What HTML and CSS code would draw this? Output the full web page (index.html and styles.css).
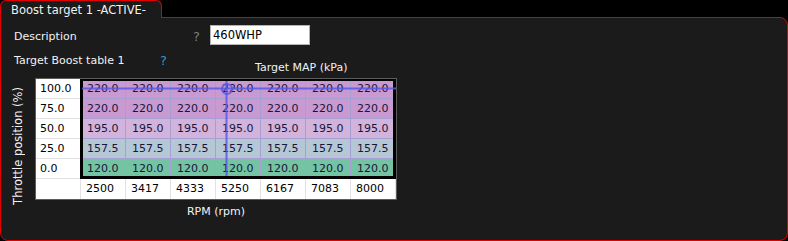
FILE: index.html
```html
<!DOCTYPE html>
<html lang="en">
  <head>
    <meta charset="UTF-8" />
    <meta name="viewport" content="width=device-width, initial-scale=1.0" />
    <title>Boost target 1</title>
    <link rel="stylesheet" href="styles.css">
  </head>
  <body>
    <div class="tab">Boost target 1 -ACTIVE-</div>
    <div class="panel">
      <div class="field-row">
        <span class="field-label">Description</span>
        <span class="help">?</span>
        <input class="text-input" type="text" value="460WHP" readonly />
      </div>
      <div class="table-row">
        <span class="table-label">Target Boost table 1</span>
        <span class="help help-info">?</span>
        <span class="x-title">Target MAP (kPa)</span>
      </div>
      <div class="chart">
        <div class="y-axis"><span>Throttle position (%)</span></div>
        <div class="plot">
          <div class="map-grid">
            <div class="cell head">100.0</div>
            <div class="cell r100">220.0</div><div class="cell r100">220.0</div><div class="cell r100">220.0</div><div class="cell r100">220.0</div><div class="cell r100">220.0</div><div class="cell r100">220.0</div><div class="cell r100">220.0</div>
            <div class="cell head">75.0</div>
            <div class="cell r75">220.0</div><div class="cell r75">220.0</div><div class="cell r75">220.0</div><div class="cell r75">220.0</div><div class="cell r75">220.0</div><div class="cell r75">220.0</div><div class="cell r75">220.0</div>
            <div class="cell head">50.0</div>
            <div class="cell r50">195.0</div><div class="cell r50">195.0</div><div class="cell r50">195.0</div><div class="cell r50">195.0</div><div class="cell r50">195.0</div><div class="cell r50">195.0</div><div class="cell r50">195.0</div>
            <div class="cell head">25.0</div>
            <div class="cell r25">157.5</div><div class="cell r25">157.5</div><div class="cell r25">157.5</div><div class="cell r25">157.5</div><div class="cell r25">157.5</div><div class="cell r25">157.5</div><div class="cell r25">157.5</div>
            <div class="cell head">0.0</div>
            <div class="cell r0">120.0</div><div class="cell r0">120.0</div><div class="cell r0">120.0</div><div class="cell r0">120.0</div><div class="cell r0">120.0</div><div class="cell r0">120.0</div><div class="cell r0">120.0</div>
            <div class="cell foot"></div>
            <div class="cell foot">2500</div><div class="cell foot">3417</div><div class="cell foot">4333</div><div class="cell foot">5250</div><div class="cell foot">6167</div><div class="cell foot">7083</div><div class="cell foot">8000</div>

            <div class="frame"></div>
            <svg class="cursor" width="316" height="100" viewBox="0 0 316 100">
              <line x1="2" y1="9.5" x2="316" y2="9.5" />
              <line x1="146.5" y1="2" x2="146.5" y2="97" />
              <circle cx="147" cy="10" r="5" />
            </svg>
          </div>
          <div class="x-axis">RPM (rpm)</div>
        </div>
      </div>
    </div>
  </body>
</html>
```
FILE: styles.css
```css
body {
  margin: 0;
  background-color: #000;
  font-family: "DejaVu Sans", Verdana, sans-serif;
  font-size: 11px;
  color: #f2f2f2;
}
.tab {
  position: relative;
  z-index: 1;
  display: inline-block;
  height: 17px;
  line-height: 18px;
  padding: 0 15px 0 10px;
  margin-bottom: -1px;
  font-size: 11.5px;
  background-color: #1b1b1b;
  border: 1px solid #e00000;
  border-bottom: none;
  border-radius: 6px 6px 0 0;
}
.panel {
  box-sizing: border-box;
  height: 224px;
  background-color: #1b1b1b;
  border: 1px solid #e00000;
  border-radius: 0 8px 8px 8px;
}
.field-row {
  display: flex;
  align-items: center;
  height: 20px;
  padding: 7px 0 0 13px;
}
.field-label {
  width: 179px;
  padding-top: 3px;
}
.help {
  width: 17px;
  padding-top: 2px;
  font-size: 13px;
  color: #7c7c7c;
}
.help-info {
  padding-top: 0;
  color: #2a9dc4;
}
.text-input {
  box-sizing: border-box;
  width: 100px;
  height: 20px;
  margin: 0;
  padding: 0 2px;
  border: 1px solid #b4b4b4;
  background-color: #fff;
  color: #000;
  font-family: inherit;
  font-size: 11.5px;
  outline: none;
}
.table-row {
  display: flex;
  align-items: flex-start;
  line-height: 14px;
  margin-top: 9px;
  padding-left: 13px;
}
.table-label {
  width: 146px;
}
.x-title {
  margin: 7px 0 0 78px;
}
.chart {
  display: flex;
  margin-top: 3px;
}
.y-axis {
  width: 34px;
  display: flex;
  align-items: center;
  justify-content: center;
}
.y-axis span {
  writing-mode: vertical-rl;
  transform: rotate(180deg);
  white-space: nowrap;
  font-size: 11.5px;
  margin-top: -6px;
}
.map-grid {
  position: relative;
  display: grid;
  grid-template-columns: repeat(8, 45px);
  grid-auto-rows: 20px;
  border: 1px solid #5c5c5c;
  color: #16163a;
}
.cell {
  box-sizing: border-box;
  line-height: 19px;
  padding-left: 6px;
  border-right: 1px solid #a69fd4;
  border-bottom: 1px solid #a69fd4;
}
.cell.head,
.cell.foot {
  padding-left: 4px;
  background-color: #fff;
  color: #000;
  border-color: #e2e2e2;
}
.cell.foot {
  border-bottom: none;
  padding-left: 5px;
}
.r100,
.r75 {
  background-color: #c99ad2;
}
.r50 {
  background-color: #d2b3dc;
}
.r25 {
  background-color: #b5c7d4;
}
.r0 {
  background-color: #74c3a3;
}
.frame {
  position: absolute;
  left: 44px;
  top: 0;
  box-sizing: border-box;
  width: 316px;
  height: 100px;
  border: 3px solid #000;
  border-top-width: 2px;
}
.cursor {
  position: absolute;
  left: 44px;
  top: 0;
}
.cursor line,
.cursor circle {
  stroke: #5858e4;
  stroke-width: 2;
  fill: none;
  opacity: 0.85;
}
.x-axis {
  margin-top: 5px;
  line-height: 14px;
  text-align: center;
}
```
